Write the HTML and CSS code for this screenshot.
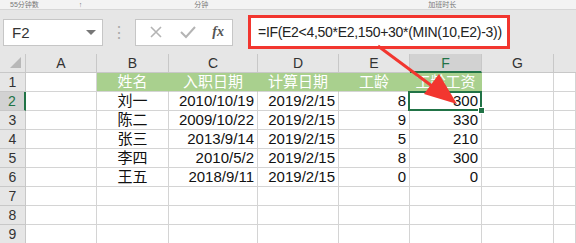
FILE: index.html
```html
<!DOCTYPE html>
<html lang="zh">
<head>
    <meta charset="UTF-8">
    <title>工龄工资</title>
    <link rel="stylesheet" href="styles.css">
</head>
<body>
    <div class="ribbon">
        <span class="r1">55分钟数</span>
        <span class="r2">↑</span>
        <span class="r3">分钟</span>
        <span class="r4">加班时长</span>
    </div>
    <div class="fbar">
        <div class="namebox">
            <span>F2</span>
            <span class="caret"></span>
        </div>
        <div class="dots">⋮</div>
        <div class="btns">
            <svg width="16" height="16" viewBox="0 0 16 16"><path d="M3 3 L13 13 M13 3 L3 13" stroke="#b4b4b4" stroke-width="1.6" fill="none"/></svg>
            <svg width="18" height="16" viewBox="0 0 18 16"><path d="M2 8 L7 13 L16 3" stroke="#b4b4b4" stroke-width="2" fill="none"/></svg>
            <span class="fx">fx</span>
        </div>
        <div class="formula">=IF(E2&lt;4,50*E2,150+30*(MIN(10,E2)-3))</div>
    </div>

    <div class="sheet">
        <div class="hd corner"><span class="tri"></span></div>
        <div class="hd">A</div>
        <div class="hd">B</div>
        <div class="hd">C</div>
        <div class="hd">D</div>
        <div class="hd">E</div>
        <div class="hd col-sel">F</div>
        <div class="hd">G</div>
        <div class="hd last"></div>

        <div class="rh">1</div>
        <div class="c"></div>
        <div class="c th">姓名</div>
        <div class="c th">入职日期</div>
        <div class="c th">计算日期</div>
        <div class="c th">工龄</div>
        <div class="c th">工龄工资</div>
        <div class="c"></div>
        <div class="c"></div>

        <div class="rh row-sel">2</div>
        <div class="c"></div>
        <div class="c mid">刘一</div>
        <div class="c num">2010/10/19</div>
        <div class="c num">2019/2/15</div>
        <div class="c num">8</div>
        <div class="c num sel">300<span class="handle"></span></div>
        <div class="c"></div>
        <div class="c"></div>

        <div class="rh">3</div>
        <div class="c"></div>
        <div class="c mid">陈二</div>
        <div class="c num">2009/10/22</div>
        <div class="c num">2019/2/15</div>
        <div class="c num">9</div>
        <div class="c num">330</div>
        <div class="c"></div>
        <div class="c"></div>

        <div class="rh">4</div>
        <div class="c"></div>
        <div class="c mid">张三</div>
        <div class="c num">2013/9/14</div>
        <div class="c num">2019/2/15</div>
        <div class="c num">5</div>
        <div class="c num">210</div>
        <div class="c"></div>
        <div class="c"></div>

        <div class="rh">5</div>
        <div class="c"></div>
        <div class="c mid">李四</div>
        <div class="c num">2010/5/2</div>
        <div class="c num">2019/2/15</div>
        <div class="c num">8</div>
        <div class="c num">300</div>
        <div class="c"></div>
        <div class="c"></div>

        <div class="rh">6</div>
        <div class="c"></div>
        <div class="c mid">王五</div>
        <div class="c num">2018/9/11</div>
        <div class="c num">2019/2/15</div>
        <div class="c num">0</div>
        <div class="c num">0</div>
        <div class="c"></div>
        <div class="c"></div>

        <div class="rh">7</div>
        <div class="c"></div><div class="c"></div><div class="c"></div><div class="c"></div>
        <div class="c"></div><div class="c"></div><div class="c"></div><div class="c"></div>

        <div class="rh">8</div>
        <div class="c"></div><div class="c"></div><div class="c"></div><div class="c"></div>
        <div class="c"></div><div class="c"></div><div class="c"></div><div class="c"></div>

        <div class="rh">9</div>
        <div class="c"></div><div class="c"></div><div class="c"></div><div class="c"></div>
        <div class="c"></div><div class="c"></div><div class="c"></div><div class="c"></div>
    </div>

    <!-- 红色箭头标注 -->
    <svg class="arrow" width="576" height="243" viewBox="0 0 576 243">
        <line x1="378" y1="46" x2="436" y2="89" stroke="#f2362f" stroke-width="3"/>
        <polygon points="457,104 424,94 439,74" fill="#f2362f"/>
    </svg>
</body>
</html>
```

FILE: styles.css
```css
body {
    margin: 0;
    width: 576px;
    height: 243px;
    overflow: hidden;
    background: #e6e6e6;
    font-family: "Liberation Sans", "Noto Sans CJK SC", sans-serif;
    position: relative;
}
.ribbon {
    height: 9px;
    background: #f3f3f3;
    border-bottom: 1px solid #d6d6d6;
    display: flex;
    align-items: center;
    font-size: 7px;
    line-height: 9px;
    color: #777;
}
.ribbon span {
    position: relative;
}
.r1 { margin-left: 10px; }
.r2 { margin-left: 40px; }
.r3 { margin-left: 112px; }
.r4 { margin-left: 220px; }

.fbar {
    height: 44px;
    display: flex;
    align-items: center;
    padding-left: 3px;
    box-sizing: border-box;
}
.namebox {
    width: 100px;
    height: 27px;
    box-sizing: border-box;
    background: #fff;
    border: 1px solid #c6c6c6;
    display: flex;
    align-items: center;
    justify-content: space-between;
    padding: 0 6px 0 8px;
    font-size: 15px;
    color: #333;
}
.caret {
    width: 0;
    height: 0;
    border-left: 5px solid transparent;
    border-right: 5px solid transparent;
    border-top: 5px solid #777;
}
.dots {
    width: 32px;
    text-align: center;
    color: #aaa;
    font-size: 16px;
}
.btns {
    width: 98px;
    height: 27px;
    box-sizing: border-box;
    background: #fff;
    border: 1px solid #c6c6c6;
    display: flex;
    align-items: center;
    justify-content: space-between;
    padding: 0 8px 0 12px;
}
.fx {
    font-family: "Liberation Serif", serif;
    font-style: italic;
    font-weight: bold;
    font-size: 14px;
    color: #555;
}
.formula {
    margin-left: 15px;
    width: 262px;
    height: 34px;
    box-sizing: border-box;
    background: #fff;
    border: 3px solid #f2362f;
    display: flex;
    align-items: center;
    padding-left: 7px;
    font-size: 14px;
    letter-spacing: -0.3px;
    color: #222;
}

.sheet {
    display: grid;
    grid-template-columns: 26px 71px 72px 89px 81px 71px 72px 72px 22px;
    grid-auto-rows: 19px;
    font-size: 15px;
}
.hd {
    background: #e6e6e6;
    border-right: 1px solid #c8c8c8;
    border-bottom: 1px solid #c8c8c8;
    box-sizing: border-box;
    text-align: center;
    line-height: 19px;
    color: #333;
    font-size: 14px;
}
.hd.last { border-right: none; }
.corner {
    position: relative;
}
.tri {
    position: absolute;
    right: 4px;
    bottom: 4px;
    width: 0;
    height: 0;
    border-left: 11px solid transparent;
    border-bottom: 11px solid #b8b8b8;
}
.col-sel {
    background: #d2d2d2;
    border-bottom: 2px solid #217346;
    color: #217346;
}
.rh {
    background: #e6e6e6;
    border-right: 1px solid #c8c8c8;
    border-bottom: 1px solid #c8c8c8;
    box-sizing: border-box;
    text-align: center;
    line-height: 19px;
    font-size: 14px;
    color: #333;
}
.row-sel {
    background: #d2d2d2;
    border-right: 2px solid #217346;
    color: #217346;
}
.c {
    background: #fff;
    border-right: 1px solid #d4d4d4;
    border-bottom: 1px solid #d4d4d4;
    box-sizing: border-box;
    line-height: 18px;
    padding: 0 3px;
    white-space: nowrap;
    color: #111;
}
.th {
    background: #a9d08e;
    color: #fff;
    text-align: center;
    border-right-color: #a9d08e;
    border-bottom-color: #d4d4d4;
}
.mid { text-align: center; }
.num { text-align: right; }
.sel {
    position: relative;
}
.sel::after {
    content: "";
    position: absolute;
    left: -2px;
    top: -1px;
    right: -1px;
    bottom: -1px;
    border: 2px solid #217346;
}
.handle {
    position: absolute;
    right: -4px;
    bottom: -4px;
    width: 5px;
    height: 5px;
    background: #217346;
    border: 1px solid #fff;
    z-index: 2;
}
.arrow {
    position: absolute;
    left: 0;
    top: 0;
}
```
